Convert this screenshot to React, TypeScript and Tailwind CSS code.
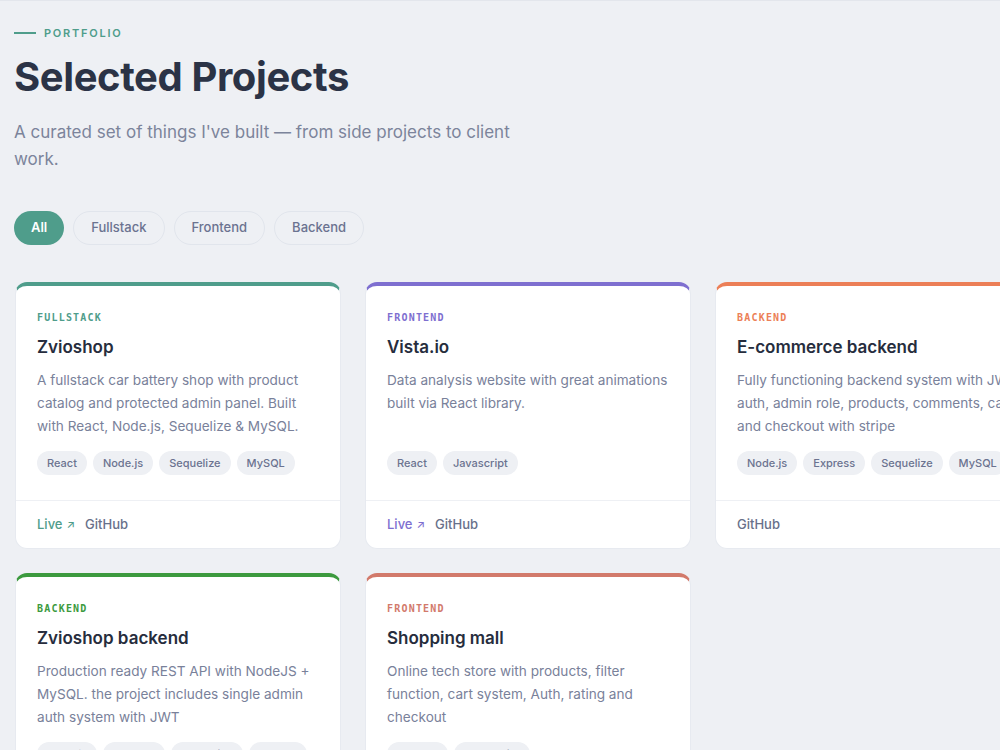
type Project = {
  category: string;
  title: string;
  description: string;
  tags: string[];
  live: boolean;
  accent: string;
};

const projects: Project[] = [
  {
    category: "Fullstack",
    title: "Zvioshop",
    description:
      "A fullstack car battery shop with product catalog and protected admin panel. Built with React, Node.js, Sequelize & MySQL.",
    tags: ["React", "Node.js", "Sequelize", "MySQL"],
    live: true,
    accent: "teal",
  },
  {
    category: "Frontend",
    title: "Vista.io",
    description: "Data analysis website with great animations built via React library.",
    tags: ["React", "Javascript"],
    live: true,
    accent: "purple",
  },
  {
    category: "Backend",
    title: "E-commerce backend",
    description:
      "Fully functioning backend system with JWT auth, admin role, products, comments, cart and checkout with stripe",
    tags: ["Node.js", "Express", "Sequelize", "MySQL"],
    live: false,
    accent: "orange",
  },
  {
    category: "Backend",
    title: "Zvioshop backend",
    description:
      "Production ready REST API with NodeJS + MySQL. the project includes single admin auth system with JWT",
    tags: ["Node.js", "Express", "Sequelize", "MySQL"],
    live: false,
    accent: "green",
  },
  {
    category: "Frontend",
    title: "Shopping mall",
    description: "Online tech store with products, filter function, cart system, Auth, rating and checkout",
    tags: ["Angular", "Typescript"],
    live: false,
    accent: "salmon",
  },
];

// accent classes spelled out so tailwind picks them up
const accents: Record<string, { bar: string; text: string }> = {
  teal: { bar: "border-t-[#4f9d8b]", text: "text-[#4f9d8b]" },
  purple: { bar: "border-t-[#7e6fd0]", text: "text-[#7e6fd0]" },
  orange: { bar: "border-t-[#ec7f57]", text: "text-[#ec7f57]" },
  green: { bar: "border-t-[#3c9a3e]", text: "text-[#3c9a3e]" },
  salmon: { bar: "border-t-[#d27a6b]", text: "text-[#d27a6b]" },
};

const filters = ["All", "Fullstack", "Frontend", "Backend"];

function ProjectCard({ project }: { project: Project }) {
  const accent = accents[project.accent];
  return (
    <div
      className={`flex flex-col rounded-xl bg-white border border-[#e7eaf0] border-t-4 ${accent.bar} overflow-hidden`}
    >
      <div className="flex flex-1 flex-col px-[21px] pt-[25px] pb-[25px]">
        <p
          className={`text-[10px] leading-[14px] font-bold uppercase tracking-[0.12em] ${accent.text}`}
          style={{ fontFamily: '"DejaVu Sans Mono", monospace' }}
        >
          {project.category}
        </p>
        <h3 className="mt-[9px] text-[17px] leading-[26px] font-semibold text-[#262d3d]">{project.title}</h3>
        <p className="mt-[9px] flex-1 text-[13.6px] leading-[23px] text-[#79819a]">{project.description}</p>
        <div className="mt-[13px] flex flex-wrap gap-1.5">
          {project.tags.map((tag) => (
            <span
              key={tag}
              className="flex h-6 items-center rounded-full bg-[#eef0f4] px-2.5 text-[11px] font-medium text-[#6b7390]"
            >
              {tag}
            </span>
          ))}
        </div>
      </div>
      <div className="flex h-12 items-center gap-2.5 border-t border-[#eef0f4] px-[21px] text-[13px] font-medium">
        {project.live && (
          <span className={`flex items-center gap-1 ${accent.text}`}>
            Live <span className="text-[11px]">↗</span>
          </span>
        )}
        <span className="text-[#68708a]">GitHub</span>
      </div>
    </div>
  );
}

export default function App() {
  return (
    <div
      className="h-[750px] overflow-hidden bg-[#eef0f4] border-t border-[#e3e6ec] px-[14px] pt-6"
      style={{ fontFamily: "Inter, 'Liberation Sans', sans-serif" }}
    >
      <div className="flex items-center gap-2">
        <span className="h-[2px] w-[22px] bg-[#4f9d8b]" />
        <span className="text-[11px] leading-4 font-semibold uppercase tracking-[0.16em] text-[#4f9d8b]">
          Portfolio
        </span>
      </div>
      <h1 className="mt-3.5 text-[40px] leading-[44px] font-bold tracking-[-0.01em] text-[#2b3346]">
        Selected Projects
      </h1>
      <p className="mt-5 max-w-[500px] text-[17px] leading-[27px] text-[#7c849b]">
        A curated set of things I've built — from side projects to client work.
      </p>

      <div className="mt-[38px] flex gap-[9px]">
        {filters.map((f, i) => (
          <button
            key={f}
            className={
              i === 0
                ? "h-[34px] rounded-full bg-[#4f9d8b] px-[17px] text-[13px] font-semibold text-white"
                : "h-[34px] rounded-full border border-[#e1e5ec] px-[17px] text-[13px] font-medium text-[#6b7390]"
            }
          >
            {f}
          </button>
        ))}
      </div>

      <div className="ml-px mt-[37px] grid grid-cols-[repeat(3,326px)] gap-6">
        {projects.map((p) => (
          <ProjectCard key={p.title} project={p} />
        ))}
      </div>
    </div>
  );
}
